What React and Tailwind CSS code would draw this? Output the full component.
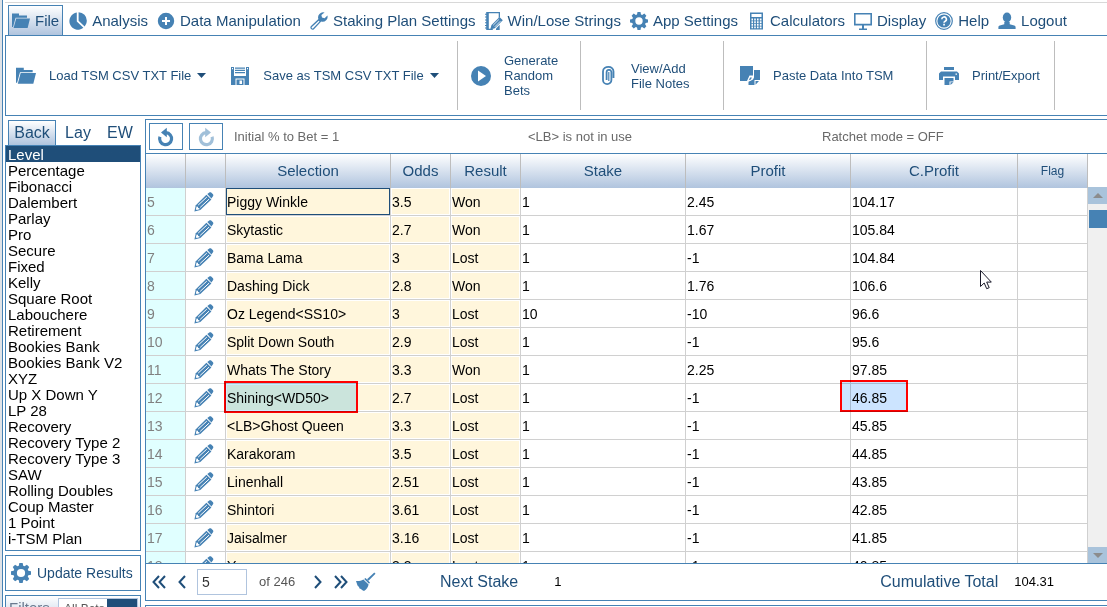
import React from "react";

const rows = [
  [5, "Piggy Winkle", "3.5", "Won", "1", "2.45", "104.17"],
  [6, "Skytastic", "2.7", "Won", "1", "1.67", "105.84"],
  [7, "Bama Lama", "3", "Lost", "1", "-1", "104.84"],
  [8, "Dashing Dick", "2.8", "Won", "1", "1.76", "106.6"],
  [9, "Oz Legend<SS10>", "3", "Lost", "10", "-10", "96.6"],
  [10, "Split Down South", "2.9", "Lost", "1", "-1", "95.6"],
  [11, "Whats The Story", "3.3", "Won", "1", "2.25", "97.85"],
  [12, "Shining<WD50>", "2.7", "Lost", "1", "-1", "46.85"],
  [13, "<LB>Ghost Queen", "3.3", "Lost", "1", "-1", "45.85"],
  [14, "Karakoram", "3.5", "Lost", "1", "-1", "44.85"],
  [15, "Linenhall", "2.51", "Lost", "1", "-1", "43.85"],
  [16, "Shintori", "3.61", "Lost", "1", "-1", "42.85"],
  [17, "Jaisalmer", "3.16", "Lost", "1", "-1", "41.85"],
  [18, "Yaroos", "3.3", "Lost", "1", "-1", "40.85"],
];

const plans = [
  "Level", "Percentage", "Fibonacci", "Dalembert", "Parlay", "Pro", "Secure", "Fixed", "Kelly",
  "Square Root", "Labouchere", "Retirement", "Bookies Bank", "Bookies Bank V2", "XYZ",
  "Up X Down Y", "LP 28", "Recovery", "Recovery Type 2", "Recovery Type 3", "SAW",
  "Rolling Doubles", "Coup Master", "1 Point", "i-TSM Plan",
];

function Svg({ className = "size-[18px]", children, box = 18 }) {
  return (
    <svg viewBox={`0 0 ${box} ${box}`} className={`${className} shrink-0 text-[#4682b4]`} fill="currentColor" aria-hidden="true">
      {children}
    </svg>
  );
}

const Folder = ({ className }) => (
  <Svg className={className}>
    <path d="M0 1.5h7v2h8v2.2H3.6L1 15H0z" />
    <path d="M4.2 6.4H18L15.6 16H1.6z" />
  </Svg>
);

const Pie = () => (
  <Svg>
    <path d="M7.8.6v9l6.6 6.2A8.6 8.6 0 1 1 7.8.6z" />
    <path d="M9.6.2a8.4 8.4 0 0 1 8.2 8.6c0 2-.8 4-2.2 5.6L9.6 8.7z" />
  </Svg>
);

const Plus = () => (
  <Svg>
    <path fillRule="evenodd" d="M9 .8a8.200 8.200 0 1 1 0 16.400A8.200 8.200 0 0 1 9 .8zM8 5v3H5v2h3v3h2v-3h3V8h-3V5z" />
  </Svg>
);

const Wrench = () => (
  <Svg>
    <path
      fillRule="evenodd"
      d="M14.6.6a5 5 0 0 0-6.2 6.5L1 14a2.2 2.2 0 0 0 3 3.2l7.2-7.6a5 5 0 0 0 6.2-6.2l-2.8 2.8-2.6-.6-.6-2.5zM8.7 8.7l.8.8-6.4 6.7a.8.8 0 0 1-1.2-1.1z"
    />
  </Svg>
);

const NotePencil = () => (
  <Svg>
    <path d="M2.500 0H15v5l-1.300 1.200V1.300H3.800v15.400h4.500L7.500 18H1.200v-1.500H0v-1h1.200V14H0v-1h1.200v-1.800H0v-1h1.200V8.400H0v-1h1.200V5.600H0v-1h1.200V2.800H0v-1h1.200V0z" />
    <path d="M14.500 5 17.800 8.300 9.800 16.300 5.200 17.600 6.500 13z" />
    <path d="m8.200 13.200 5.600-5.600M9.800 14.800l5.600-5.600" stroke="#fff" strokeWidth=".8" />
    <path d="M11 18v-1.500l3.700-3.700V18z" />
  </Svg>
);

const Gear = ({ className }) => (
  <Svg className={className}>
    <path
      fillRule="evenodd"
      d="M7.500 0h3l.5 2.400 1.200.5 2.100-1.300 2.100 2.100-1.300 2.100.5 1.200L18 7.500v3l-2.400.5-.5 1.200 1.300 2.100-2.100 2.100-2.100-1.300-1.200.5-.5 2.400h-3L7 15.600l-1.200-.5-2.100 1.300-2.100-2.100 1.300-2.100-.5-1.200L0 10.500v-3L2.400 7l.5-1.200L1.600 3.700l2.100-2.100 2.100 1.300L7 2.400zM9 5.300a3.700 3.700 0 1 0 0 7.400 3.700 3.700 0 0 0 0-7.400z"
    />
  </Svg>
);

const Calculator = () => (
  <Svg>
    <path
      fillRule="evenodd"
      d="M3 .5h13v17H3zM4.500 2v3h10V2zM4.500 6.500v2H6v-2zm2.700 0v2h1.600v-2zm2.800 0v2h1.600v-2zm2.800 0v2h1.700v-2zM4.500 9.300v2H6v-2zm2.700 0v2h1.600v-2zm2.800 0v2h1.600v-2zm2.800 0v2h1.700v-2zM4.500 12v1.700H6V12zm2.700 0v1.700h1.600V12zm2.800 0v1.700h1.600V12zm2.800 0v1.700h1.700V12zM4.500 14.500v1.700H6v-1.700zm2.700 0v1.700h1.600v-1.700zm2.800 0v1.700h1.600v-1.700zm2.800 0v1.700h1.700v-1.700z"
    />
  </Svg>
);

const Monitor = () => (
  <Svg>
    <path fillRule="evenodd" d="M0 1h18v12.500h-8v3h3V18H5v-1.500h3v-3H0zM1.600 2.600v9.200h14.800V2.600z" />
  </Svg>
);

const Help = () => (
  <Svg>
    <circle cx="9" cy="9" r="8.300" fill="none" stroke="currentColor" strokeWidth="1.200" />
    <circle cx="9" cy="9" r="6.600" />
    <path d="M6.800 7.200a2.300 2.300 0 1 1 3.400 2c-.9.500-1.200.8-1.200 1.600" fill="none" stroke="#fff" strokeWidth="1.600" />
    <path d="M8.200 11.800h1.700v1.700H8.200z" fill="#fff" />
  </Svg>
);

const Person = () => (
  <Svg>
    <ellipse cx="9" cy="5.500" rx="4.200" ry="5" />
    <path d="M6.300 10h5.400v2.200l4.500 1.400c.9.300 1.400.8 1.400 1.700V17H.4v-1.700c0-.9.500-1.400 1.400-1.700l4.500-1.400z" />
  </Svg>
);

const Disk = () => (
  <Svg className="size-5" box={20}>
    <path fillRule="evenodd" d="M1 1h18v18H1zM4 1v9h12V1zM2 2v1.200h1V2zm15 0v1.200h1V2zM5.500 12.500V19h9v-6.500z" />
    <path d="M5 1.500h10v1.200H5zm0 2.300h10V5H5zm0 2.300h10v1.200H5z" />
    <path fillRule="evenodd" d="M6.500 13.500h7V19h-7zM9.500 14.500V18H12v-3.500z" />
  </Svg>
);

const Play = () => (
  <Svg className="size-5" box={20}>
    <path fillRule="evenodd" d="M10 0a10 10 0 1 1 0 20 10 10 0 0 1 0-20zM7 4.500v11l8-5.500z" />
  </Svg>
);

const Clip = () => (
  <Svg className="size-5" box={20}>
    <path
      d="M15.500 12V5.500C15.500 2.500 13.200.9 10.500.9S5 2.500 5 5.500V14a4.200 4.200 0 0 0 8.400 0V6.500a2.200 2.200 0 0 0-4.800-.5v8"
      fill="none"
      stroke="currentColor"
      strokeWidth="1.800"
    />
    <path d="M10.800 6v9" fill="none" stroke="currentColor" strokeWidth="1.200" />
  </Svg>
);

const Paste = () => (
  <Svg className="size-5" box={20}>
    <path d="M0 0h13v9.500H9.500L7 15H0z" />
    <path d="M14 4h6v10h-5.500V19H8.500v-3.200l4.500-2.300 1-2z" />
    <path d="m7.500 15.500 2-5h3.700l-1.500 3.500z" fill="#fff" />
    <path d="m8.800 14.200 1.300-2.700 1.800-.1-1 2zM15.500 15H19l-3.500 3.800z" />
  </Svg>
);

const Printer = () => (
  <Svg className="size-5" box={20}>
    <path d="M5 1h10v3H5z" />
    <path fillRule="evenodd" d="M2 5.500h16l2 2V14h-4v-3.500H4V14H0V7.500zm14.500 2v1.200H18V7.500z" />
    <path d="M5.500 12h9v3.500h-4V19h-5z" />
    <path d="M11.500 16.300h3l-3 2.700z" />
  </Svg>
);

const Caret = () => (
  <svg viewBox="0 0 9 5" className="h-[5px] w-[9px] shrink-0" fill="#1f4e79" aria-hidden="true">
    <path d="M0 0h9L4.500 5z" />
  </svg>
);

const Pencil = () => (
  <Svg className="size-5" box={20}>
    <path d="m12.400 2.800 5 4.800L6.300 18 .4 19.500l1.400-6.300z" />
    <path d="m4.200 13.100 8.600-8M6.200 15.400l8.900-8.300" stroke="#fff" strokeWidth="1" />
    <path d="m2.600 14.600 1.300.2.200 1.300 1.300.2.100 1-2.800.7-.8-.7z" fill="#fff" />
    <path d="M13.300 2.100 15.300.5c.6-.5 1.300-.5 1.900 0l1.800 1.800c.5.600.5 1.300 0 1.900l-1.600 2.400z" />
  </Svg>
);

const Undo = ({ flip }) => (
  <Svg className={flip ? "size-5 -scale-x-100 opacity-50" : "size-5"} box={20}>
    <path d="M10 5.700A6 6 0 1 1 3.900 9.800" fill="none" stroke="currentColor" strokeWidth="3.200" />
    <path d="M10.800.8v9.400L5 5.500z" />
  </Svg>
);

const Chevron = ({ double, right }) => (
  <svg
    viewBox={double ? "0 0 14 14" : "0 0 8 14"}
    className={`h-[14px] shrink-0 ${double ? "w-[14px]" : "w-2"} ${right ? "-scale-x-100" : ""}`}
    fill="none"
    stroke="#1f4e79"
    strokeWidth="2"
    aria-hidden="true"
  >
    <path d="M7 1 1.500 7 7 13" />
    {double && <path d="M13 1 7.500 7l5.500 6" />}
  </svg>
);

const Brush = () => (
  <Svg className="size-5" box={20}>
    <path d="m18.300.5 1.200 1.200-7 7-1.500-1.500z" />
    <path d="m9.500 6 4.500 4.500-1 1.200-4.800-4.600zM7.400 7.400l5.200 5.200c-.6 3-2.100 4.900-4.600 6.400l-2-1-1-1-1.500-.5-.5-1.500-1.500-1.500L0 9c3 .2 5.200-.2 7.400-1.600z" />
  </Svg>
);

const menu = [
  ["File", <Folder />],
  ["Analysis", <Pie />],
  ["Data Manipulation", <Plus />],
  ["Staking Plan Settings", <Wrench />],
  ["Win/Lose Strings", <NotePencil />],
  ["App Settings", <Gear />],
  ["Calculators", <Calculator />],
  ["Display", <Monitor />],
  ["Help", <Help />],
  ["Logout", <Person />],
];

const columns = [
  ["", "w-10"],
  ["", "w-10"],
  ["Selection", "w-[165px]"],
  ["Odds", "w-[60px]"],
  ["Result", "w-[70px]"],
  ["Stake", "w-[165px]"],
  ["Profit", "w-[165px]"],
  ["C.Profit", ""],
  ["Flag", "w-[70px]"],
];

function RibbonButton({ icon, label, caret }) {
  return (
    <button className="flex items-center gap-[13px] text-left">
      {icon}
      <span className="flex items-center gap-[6px] whitespace-pre-line">
        {label}
        {caret && <Caret />}
      </span>
    </button>
  );
}

function Ribbon() {
  return (
    <div className="flex h-[81px] shrink-0 border border-r-0 border-[#4682b4] py-[5px] text-[13px] leading-[15px]">
      <div className="flex w-[452px] shrink-0 items-center gap-6 border-r border-[#bdbdbd] pl-[10px]">
        <RibbonButton icon={<Folder className="size-5" />} label="Load TSM CSV TXT File" caret />
        <RibbonButton icon={<Disk />} label="Save as TSM CSV TXT File" caret />
      </div>
      <div className="flex w-[123px] shrink-0 items-center border-r border-[#bdbdbd] pl-[13px]">
        <RibbonButton icon={<Play />} label={"Generate\nRandom\nBets"} />
      </div>
      <div className="flex w-[143px] shrink-0 items-center border-r border-[#bdbdbd] pl-[17px]">
        <RibbonButton icon={<Clip />} label={"View/Add\nFile Notes"} />
      </div>
      <div className="flex w-[203px] shrink-0 items-center border-r border-[#bdbdbd] pl-4">
        <RibbonButton icon={<Paste />} label="Paste Data Into TSM" />
      </div>
      <div className="flex w-[128px] shrink-0 items-center border-r border-[#bdbdbd] pl-3">
        <RibbonButton icon={<Printer />} label="Print/Export" />
      </div>
    </div>
  );
}

function Sidebar() {
  return (
    <aside className="flex w-[136px] shrink-0 flex-col pt-1">
      <div className="flex h-[25px] shrink-0 pl-[3px] text-[16px] leading-6">
        <button className="w-12 border border-b-0 border-[#4682b4] bg-linear-to-b from-white to-[#b0c4de]">Back</button>
        <button className="w-11">Lay</button>
        <button className="w-10">EW</button>
      </div>
      <select
        size={25}
        defaultValue="Level"
        aria-label="Staking plan"
        className="h-[406px] w-full shrink-0 appearance-none overflow-hidden rounded-none border border-[#4682b4] bg-white p-0 text-[15px] text-black outline-none"
      >
        {plans.map((p) => (
          <option
            key={p}
            className="block h-4 min-h-4 p-0 pl-[2px] leading-[14px] checked:bg-[#1f4e79] checked:bg-linear-to-b checked:from-[#1f4e79] checked:to-[#1f4e79] checked:text-white"
          >
            {p}
          </option>
        ))}
      </select>
      <button className="mt-1 flex h-9 shrink-0 items-center gap-[6px] border border-[#4682b4] pl-[5px] text-[14px]">
        <Gear className="size-5" />
        Update Results
      </button>
      <div className="mt-1 flex h-9 shrink-0 items-start border border-[#4682b4] bg-linear-to-b from-white to-[#b0c4de] pt-[2px]">
        <label htmlFor="filter" className="w-[52px] pl-[3px] text-[15px] leading-5 text-[#6b7a90]">
          Filters
        </label>
        <div className="mr-[2px] flex h-[22px] min-w-0 flex-1 border border-[#b0c4de] bg-white">
          <input id="filter" defaultValue="All Bets" className="w-12 bg-white pl-[5px] text-[12px] text-[#555] outline-none" />
          <button aria-label="Choose filter" className="flex flex-1 items-center justify-center gap-1 bg-[#1f4e79]">
            <span className="border-x-4 border-t-5 border-x-transparent border-t-white" />
            <span className="border-x-4 border-t-5 border-x-transparent border-t-white" />
          </button>
        </div>
      </div>
    </aside>
  );
}

function Marker({ className }) {
  return <span className={`pointer-events-none absolute z-10 border-2 border-[#f00] mix-blend-multiply ${className}`} />;
}

function InputCell({ children, focused }) {
  return (
    <div className={`h-[27px] border bg-[#fff6dc] leading-[26px] ${focused ? "border-[#1f4e79]" : "border-white"}`}>
      {children}
    </div>
  );
}

function Grid() {
  const cell = "h-7 border-r border-b border-[#d0d0d0] p-0";
  return (
    <table className="w-full table-fixed border-separate border-spacing-0 text-[14px] leading-5 text-black">
      <thead>
        <tr>
          {columns.map(([name, width], i) => (
            <th
              key={i}
              className={`${width} h-[34px] border-r border-[#bdbdbd] bg-linear-to-b from-white to-[#b0c4de] p-0 font-normal text-[#1f4e79] ${
                name === "Flag" ? "text-[12px]" : "text-[15px]"
              }`}
            >
              {name}
            </th>
          ))}
        </tr>
      </thead>
      <tbody>
        {rows.map(([n, selection, odds, result, stake, profit, total], i) => (
          <tr key={n}>
            <td className={`${cell} bg-[#e0ffff] pl-px text-[#808080]`}>{n}</td>
            <td className={cell}>
              <button aria-label={`Edit row ${n}`} className="flex w-full justify-center pr-1">
                <Pencil />
              </button>
            </td>
            <td className={`${cell} relative`}>
              <InputCell focused={i === 0}>{selection}</InputCell>
              {n === 12 && <Marker className="-top-[3px] -left-[2px] h-8 w-[134px] bg-[#cbedff]" />}
            </td>
            <td className={cell}>
              <InputCell>{odds}</InputCell>
            </td>
            <td className={cell}>
              <InputCell>{result}</InputCell>
            </td>
            <td className={`${cell} pl-px`}>{stake}</td>
            <td className={`${cell} pl-px`}>{profit}</td>
            <td className={`${cell} relative pl-px`}>
              {total}
              {n === 12 && <Marker className="-top-1 -left-[11px] h-8 w-[68px] bg-[#cce4ff]" />}
            </td>
            <td className={cell} />
          </tr>
        ))}
      </tbody>
    </table>
  );
}

function ScrollBar() {
  return (
    <div className="mt-[33px] flex w-[19px] shrink-0 flex-col bg-[#f0f0f0]">
      <button aria-label="Scroll up" className="flex h-[17px] items-center justify-center bg-[#a9c3db]">
        <span className="border-x-5 border-b-5 border-x-transparent border-b-[#8c8c8c]" />
      </button>
      <div className="flex-1 pt-[6px] pl-px">
        <div className="h-[18px] bg-[#4682b4]" />
      </div>
      <button aria-label="Scroll down" className="flex h-4 items-center justify-center bg-[#a9c3db]">
        <span className="border-x-5 border-t-5 border-x-transparent border-t-[#8c8c8c]" />
      </button>
    </div>
  );
}

function Pager() {
  return (
    <div className="flex h-[38px] shrink-0 items-center border-y border-[#4682b4] pl-[6px] text-[13px]">
      <button aria-label="First page"><Chevron double /></button>
      <button aria-label="Previous page" className="ml-3"><Chevron /></button>
      <input aria-label="Row" defaultValue="5" className="ml-[11px] h-[26px] w-[50px] border border-[#b0c4de] pl-1 text-[14px] text-[#333] outline-none" />
      <span className="ml-3 w-[55px] text-[#555]">of 246</span>
      <button aria-label="Next page"><Chevron right /></button>
      <button aria-label="Last page" className="ml-3"><Chevron double right /></button>
      <button aria-label="Clear" className="ml-2"><Brush /></button>
      <span className="ml-16 text-[16px]">Next Stake</span>
      <span className="ml-9 text-black">1</span>
      <span className="ml-auto text-[16px]">Cumulative Total</span>
      <span className="mr-[53px] ml-4 text-black">104.31</span>
    </div>
  );
}

export default function App() {
  return (
    <div className="flex h-screen overflow-hidden bg-[#dfe3e8] pl-[2px] font-['Liberation_Sans',Arial,sans-serif] text-[#1f4e79]">
      <div className="flex min-w-0 flex-1 flex-col border-l border-[#4682b4] bg-white pl-[2px]">
        <div className="h-[3px] shrink-0 border-b border-[#d8d8d8]" />
        <nav className="mt-[2px] flex h-[30px] shrink-0 gap-px pl-[3px] text-[15px]">
          {menu.map(([label, icon], i) => (
            <button
              key={label}
              className={`flex shrink-0 items-center gap-[5px] border border-b-0 px-[3px] pt-px whitespace-nowrap ${
                i === 0 ? "mr-px border-[#4682b4] bg-linear-to-b from-white to-[#b0c4de]" : "border-transparent"
              }`}
            >
              {icon}
              {label}
            </button>
          ))}
        </nav>
        <Ribbon />
        <div className="flex min-h-0 flex-1">
          <Sidebar />
          <main className="ml-1 flex min-w-0 flex-1 flex-col pt-[3px]">
            <section className="flex min-h-0 flex-1 flex-col border-t border-l border-[#4682b4]">
              <div className="flex h-[34px] shrink-0 items-center border-b border-[#4682b4] pl-[3px] text-[13px] text-[#696969]">
                <button aria-label="Undo" className="flex h-[27px] w-[34px] items-center justify-center border border-[#4682b4]"><Undo /></button>
                <button aria-label="Redo" className="ml-[6px] flex h-[27px] w-[34px] items-center justify-center border border-[#4682b4]"><Undo flip /></button>
                <span className="ml-[11px] w-[294px]">Initial % to Bet = 1</span>
                <span className="w-[294px]">&lt;LB&gt; is not in use</span>
                <span>Ratchet mode = OFF</span>
              </div>
              <div className="flex min-h-0 flex-1 overflow-hidden">
                <div className="min-w-0 flex-1 overflow-hidden"><Grid /></div>
                <ScrollBar />
              </div>
              <Pager />
            </section>
            <div className="mt-1 h-[2px] shrink-0 border-t border-l border-[#4682b4]" />
          </main>
        </div>
      </div>
      <svg viewBox="0 0 12 20" className="pointer-events-none absolute top-[270px] left-[980px] h-5 w-3" fill="#fff" stroke="#1a1a2a" aria-hidden="true">
        <path d="M.5.500v16l3.700-3.500 2.500 5.700 2.500-1-2.500-5.600h4.600z" />
      </svg>
    </div>
  );
}
